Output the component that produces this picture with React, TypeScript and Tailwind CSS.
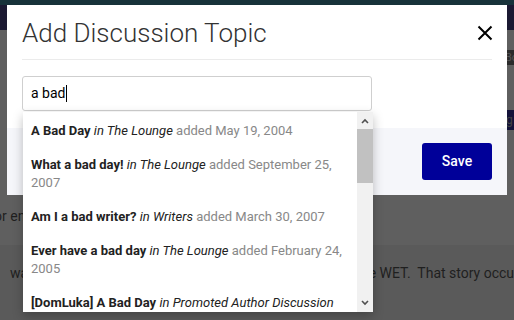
import React from 'react';

const results = [
  { title: 'A Bad Day', forum: 'The Lounge', date: 'May 19, 2004' },
  { title: 'What a bad day!', forum: 'The Lounge', date: 'September 25, 2007' },
  { title: 'Am I a bad writer?', forum: 'Writers', date: 'March 30, 2007' },
  { title: 'Ever have a bad day', forum: 'The Lounge', date: 'February 24, 2005' },
  { title: '[DomLuka] A Bad Day', forum: 'Promoted Author Discussion', date: 'June 2, 2006' },
];

const App: React.FC = () => {
  return (
    <div className="relative w-[514px] h-[320px] overflow-hidden bg-[#5a5a5a] font-['Roboto',sans-serif]">
      {/* page behind the overlay */}
      <div className="h-[5px] bg-[#17323a]"></div>
      <div className="h-[25px] bg-[#1b1932]"></div>
      <div className="h-[20px] bg-[#5f5f5f]"></div>
      <div className="flex justify-end bg-[#5f5f5f]">
        <div className="w-[10px] h-[15px] bg-[#2b2b2b] text-[11px] text-[#555] leading-[15px] pl-[1px]">Bo</div>
      </div>
      <div className="h-[45px] bg-[#5f5f5f]"></div>
      <div className="flex justify-end bg-[#5f5f5f]">
        <div className="w-[8px] h-[20px] bg-[#14133a] text-[12px] text-[#444] leading-[20px]">g</div>
      </div>
      <div className="h-[115px] bg-[#5f5f5f] text-[14px] leading-[20px] text-[#1f1f1f] pt-[76px] -ml-[6px]">or en</div>
      <div className="flex justify-between text-[14px] leading-[20px] text-[#1f1f1f] pt-[18px]">
        <span className="ml-[10px]">wa</span>
        <span className="-mr-[12px]">the WET.&nbsp; That story occurs</span>
      </div>

      {/* modal */}
      <div className="absolute left-[7px] top-[5px] w-[500px] h-[190px] bg-white flex flex-col">
        <div className="px-[15px] pt-[6px]">
          <div className="flex items-center justify-between h-[49px] border-b border-[#ebebeb]">
            <h2 className="text-[26px] font-light text-[#333] pb-[4px]">Add Discussion Topic</h2>
            <svg width="16" height="16" viewBox="0 0 16 16" className="mr-[-1px] mb-[5px]">
              <path d="M1.5 1.5 L14.5 14.5 M14.5 1.5 L1.5 14.5" stroke="#000" strokeWidth="2" />
            </svg>
          </div>
          <div className="pt-[16px]">
            <div className="w-[350px] h-[35px] border border-[#cfcfcf] rounded-[3px] flex items-center pl-[8px] text-[14px] text-black">
              a bad<span className="inline-block w-[1px] h-[17px] bg-black ml-[1px]"></span>
            </div>
          </div>
        </div>
        <div className="mt-auto h-[67px] bg-[#f5f6fa] flex items-center justify-end pr-[15px]">
          <button className="w-[70px] h-[37px] rounded-[3px] bg-[#000099] text-white text-[14px] font-medium">Save</button>
        </div>
      </div>

      {/* autocomplete dropdown */}
      <div className="absolute left-[23px] top-[112px] w-[350px] h-[200px] bg-white shadow-[0_4px_10px_rgba(0,0,0,0.25)] flex overflow-hidden">
        <ul className="flex-1 text-[13px] leading-[18px] pt-[2px]">
          {results.map((r) => (
            <li key={r.title} className="px-[8px] py-[8px]">
              <b className="font-bold text-[#222]">{r.title}</b>{' '}
              <i className="text-[#222]">in {r.forum}</i>{' '}
              <span className="text-[#888]">added {r.date}</span>
            </li>
          ))}
        </ul>
        <div className="w-[16px] bg-[#f1f1f1] flex flex-col items-center">
          <svg width="10" height="17" viewBox="0 0 10 17" className="shrink-0">
            <path d="M2 11 L5 8 L8 11" stroke="#505050" strokeWidth="1.6" fill="none" />
          </svg>
          <div className="w-[16px] h-[54px] bg-[#c1c1c1]"></div>
          <div className="flex-1"></div>
          <svg width="10" height="17" viewBox="0 0 10 17" className="shrink-0">
            <path d="M2 6 L5 9 L8 6" stroke="#505050" strokeWidth="1.6" fill="none" />
          </svg>
        </div>
      </div>
    </div>
  );
};

export default App;
